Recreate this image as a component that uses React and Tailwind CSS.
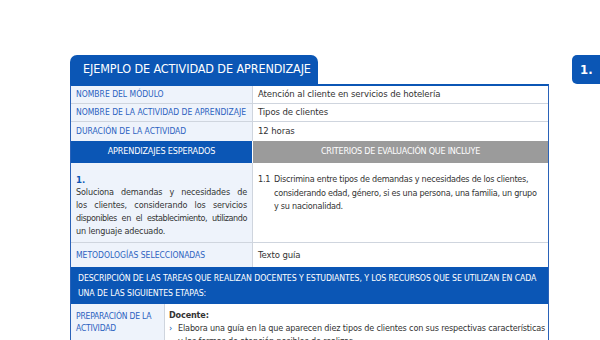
export default function App() {
  const font = { fontFamily: '"DejaVu Sans Condensed", "Liberation Sans Narrow", "Liberation Sans", sans-serif' };
  const label = "w-[182px] shrink-0 bg-[#eef3fb] text-[#2a62c0] text-[8.5px] pl-[5px] flex items-center border-r border-[#cfd5de] whitespace-nowrap";
  const val = "flex-1 min-w-0 text-[#333] text-[9.5px] tracking-[-0.1px] pl-[5px] flex items-center whitespace-nowrap";
  const jline = "text-justify [text-align-last:justify] whitespace-nowrap";
  return (
    <div className="w-[600px] h-[340px] overflow-hidden bg-white" style={font}>
      <div className="flex pt-[55px] pl-[70px]">
        <div className="w-[479px] shrink-0 flex flex-col">
          <div className="w-[248px] h-[29px] bg-[#0b56b5] rounded-t-[7px] text-white text-[12.5px] tracking-[-0.1px] flex items-center pl-[13px] whitespace-nowrap">
            EJEMPLO DE ACTIVIDAD DE APRENDIZAJE
          </div>
          <div className="border-t-2 border-[#0b56b5] border-x border-x-[#2a62b8] flex flex-col">
            <div className="flex h-[18px] border-b border-[#cfd5de]">
              <div className={label}>NOMBRE DEL MÓDULO</div>
              <div className={val}>Atención al cliente en servicios de hotelería</div>
            </div>
            <div className="flex h-[18px] border-b border-[#cfd5de]">
              <div className={label}>NOMBRE DE LA ACTIVIDAD DE APRENDIZAJE</div>
              <div className={val}>Tipos de clientes</div>
            </div>
            <div className="flex h-[19px]">
              <div className={label}>DURACIÓN DE LA ACTIVIDAD</div>
              <div className={val}>12 horas</div>
            </div>
            <div className="flex h-[22px]">
              <div className="w-[182px] shrink-0 bg-[#0b56b5] text-white text-[9px] tracking-[-0.15px] flex items-center justify-center border-r border-white whitespace-nowrap">APRENDIZAJES ESPERADOS</div>
              <div className="flex-1 bg-[#9b9b9b] text-white text-[9px] tracking-[-0.25px] flex items-center justify-center whitespace-nowrap">CRITERIOS DE EVALUACIÓN QUE INCLUYE</div>
            </div>
            <div className="flex h-[80px] border-b border-[#cfd5de]">
              <div className="w-[182px] shrink-0 bg-[#eef3fb] pl-[5px] pr-[5px] pt-[10px] border-r border-[#cfd5de] text-[9px] leading-[13px]">
                <div className="text-[#0b56b5] font-bold text-[9.5px]">1.</div>
                <div className="text-[#333] tracking-[-0.15px]">
                  <div className={jline}>Soluciona demandas y necesidades de</div>
                  <div className={jline}>los clientes, considerando los servicios</div>
                  <div className={jline + " tracking-[-0.45px]"}>disponibles en el establecimiento, utilizando</div>
                  <div className="whitespace-nowrap">un lenguaje adecuado.</div>
                </div>
              </div>
              <div className="flex-1 min-w-0 pl-[5px] pr-[6px] pt-[10px] flex text-[#333] text-[9px] leading-[13.5px] tracking-[-0.25px] whitespace-nowrap">
                <span className="w-[16px] shrink-0">1.1</span>
                <div>
                  <div>Discrimina entre tipos de demandas y necesidades de los clientes,</div>
                  <div>considerando edad, género, si es una persona, una familia, un grupo</div>
                  <div>y su nacionalidad.</div>
                </div>
              </div>
            </div>
            <div className="flex h-[24px]">
              <div className={label}>METODOLOGÍAS SELECCIONADAS</div>
              <div className={val}>Texto guía</div>
            </div>
            <div className="h-[37px] bg-[#0b56b5] text-white text-[8.7px] tracking-[-0.1px] leading-[15px] pl-[7px] pr-[4px] pt-[4px] whitespace-nowrap">
              <div>DESCRIPCIÓN DE LAS TAREAS QUE REALIZAN DOCENTES Y ESTUDIANTES, Y LOS RECURSOS QUE SE UTILIZAN EN CADA</div>
              <div>UNA DE LAS SIGUIENTES ETAPAS:</div>
            </div>
            <div className="flex h-[60px]">
              <div className="w-[94px] shrink-0 bg-[#eef3fb] text-[#2a62c0] text-[8.5px] tracking-[-0.2px] leading-[12px] pl-[5px] pt-[6px] border-r border-[#cfd5de] whitespace-nowrap">
                <div>PREPARACIÓN DE LA</div>
                <div>ACTIVIDAD</div>
              </div>
              <div className="flex-1 min-w-0 pl-[4px] pr-[4px] pt-[5px] text-[#333] text-[9px] tracking-[-0.15px] leading-[13px] whitespace-nowrap">
                <div className="font-bold">Docente:</div>
                <div className="flex">
                  <span className="w-[9px] shrink-0 text-[#0b56b5]">›</span>
                  <div>
                    <div>Elabora una guía en la que aparecen diez tipos de clientes con sus respectivas características</div>
                    <div>y las formas de atención posibles de realizar.</div>
                  </div>
                </div>
              </div>
            </div>
          </div>
        </div>
        <div className="ml-auto w-[28px] h-[29px] bg-[#0b56b5] rounded-l-[5px] text-white text-[13px] font-bold flex items-center pl-[8px]">1.</div>
      </div>
    </div>
  );
}
